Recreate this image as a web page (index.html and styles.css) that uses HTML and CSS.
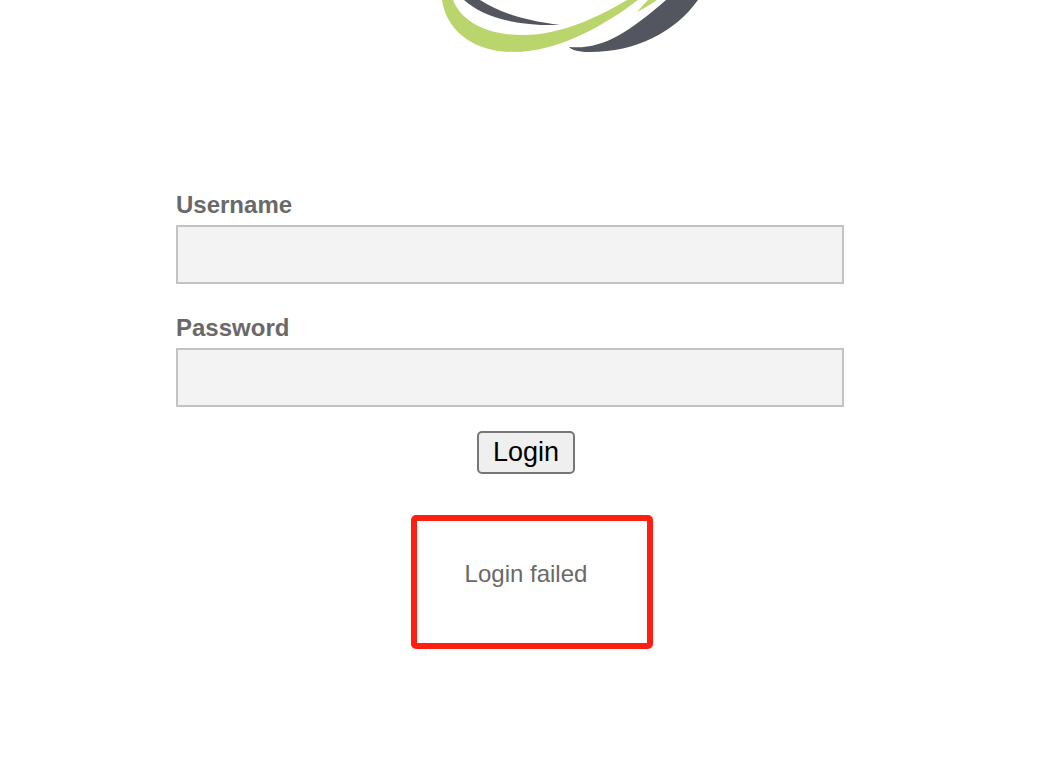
FILE: index.html
```html
<!DOCTYPE html>
<html lang="en">
<head>
    <meta charset="UTF-8">
    <meta name="viewport" content="width=device-width, initial-scale=1.0">
    <title>Login</title>
    <link rel="stylesheet" href="styles.css">
</head>
<body>
    <div class="main-ctr">
        <svg class="logo" width="348" height="54" viewBox="352 0 348 54" aria-hidden="true">
            <path fill="#bbd56d" d="M442 0C446 28 470 52 514 52C557 52 604 26 638 0H627C600 16 562 35 523 35C484 35 461 20 453 0Z"/>
            <path fill="#bbd56d" d="M637 12C641 7 645 3 648 0H657C651 4 645 8 637 12Z"/>
            <path fill="#53565e" d="M464 0C483 17 515 26 560 25C526 21 500 13 480 0Z"/>
            <path fill="#53565e" d="M569 47C601 50 627 34 666 0H698C675 32 636 52 590 52C580 52 571 50 569 47Z"/>
        </svg>
        <form class="login-form">
            <div class="field">
                <label for="username">Username</label>
                <input id="username" type="text" name="username">
            </div>
            <div class="field">
                <label for="password">Password</label>
                <input id="password" type="password" name="password">
            </div>
            <button class="login-btn" type="submit">Login</button>
        </form>
        <div class="msg-ctr">
            <p class="msg">Login failed</p>
        </div>
    </div>
</body>
</html>
```
FILE: styles.css
```css
*, *:before, *:after {
    margin: 0;
    padding: 0;
    box-sizing: border-box;
}
body {
    padding-right: 3px;
    background: white;
    color: #696969;
    font-family: "Liberation Sans", Arial, sans-serif;
    font-size: 24px;
    line-height: 28px;
}
.main-ctr {
    max-width: 700px;
    margin: 0 auto;
}
.logo {
    display: block;
    margin: 0 auto 137px;
}
.field {
    margin-bottom: 30px;
    padding-right: 32px;
}
.field:nth-child(2) {
    margin-bottom: 24px;
}
.field label {
    display: block;
    margin-bottom: 6px;
    font-weight: bold;
}
.field input {
    display: block;
    width: 100%;
    height: 59px;
    padding: 0 12px;
    background: #f3f3f3;
    border: 2px solid #c3c3c3;
    outline: none;
    color: #696969;
    font-family: inherit;
    font-size: 24px;
}
.login-btn {
    display: block;
    margin: 0 auto;
    padding: 4px 14px;
    background: #efefef;
    border: 2px solid #767676;
    border-radius: 5px;
    color: black;
    font-family: inherit;
    font-size: 27px;
    line-height: 31px;
    cursor: pointer;
}
.msg-ctr {
    display: flex;
    justify-content: center;
    margin-top: 41px;
    padding-left: 12px;
}
.msg {
    padding: 39px 60px 55px 48px;
    border: 6px solid #ff1e12;
    border-radius: 5px;
}
```
